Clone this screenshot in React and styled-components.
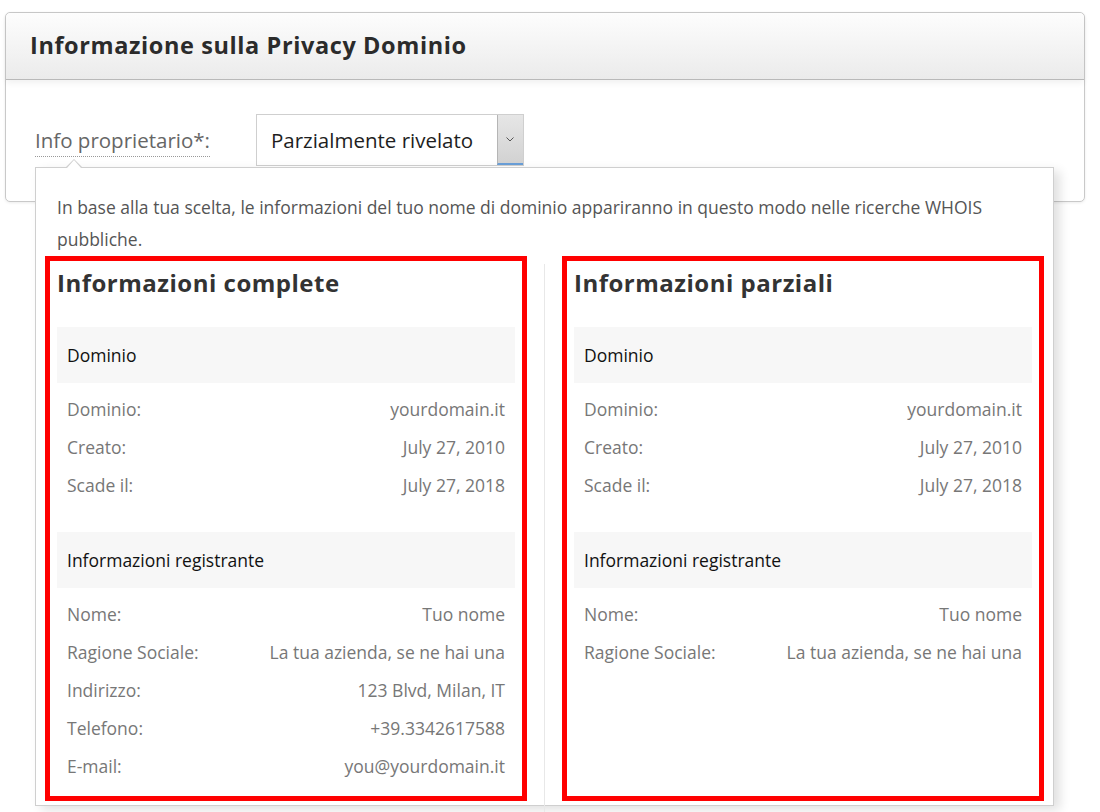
import React from 'react';
import styled, { createGlobalStyle } from 'styled-components';

const GlobalStyle = createGlobalStyle`
  body {
    margin: 0;
    background: #fff;
    font-family: "Open Sans", "Liberation Sans", sans-serif;
  }
`;

const Page = styled.div`
  position: relative;
  padding: 12px 15px 0 5px;
  height: 812px;
  box-sizing: border-box;
`;

const Card = styled.div`
  border: 1px solid #c9c9c9;
  border-radius: 5px;
  background: #fff;
  box-shadow: 0 1px 3px rgba(0, 0, 0, 0.08);
`;

const CardHeader = styled.div`
  height: 66px;
  display: flex;
  align-items: center;
  padding: 0 24px;
  background: linear-gradient(to bottom, #fdfdfd 0%, #ebebeb 100%);
  border-bottom: 1px solid #b9b9b9;
  border-radius: 5px 5px 0 0;
  box-shadow: 0 3px 6px rgba(0, 0, 0, 0.06);
`;

const Title = styled.h2`
  margin: -3px 0 0;
  font-family: "Open Sans", "Liberation Sans", sans-serif;
  font-weight: 700;
  font-size: 23.5px;
  color: #2b2b2b;
  letter-spacing: 0.6px;
`;

const CardBody = styled.div`
  padding: 34px 29px 35px;
`;

const FormRow = styled.div`
  position: relative;
  display: flex;
  align-items: center;
  gap: 46px;
`;

const Label = styled.span`
  margin-top: 4px;
  font-size: 20.5px;
  color: #666;
  padding-bottom: 2px;
  border-bottom: 1px dotted #999;
  line-height: 27px;
`;

const Select = styled.div`
  width: 268px;
  height: 52px;
  box-sizing: border-box;
  border: 1px solid #cfcfcf;
  display: flex;
  align-items: stretch;
  background: #fff;
`;

const SelectValue = styled.span`
  flex: 1;
  display: flex;
  align-items: center;
  padding-left: 14px;
  font-size: 20.5px;
  color: #1e1e1e;
`;

const SelectArrow = styled.span`
  width: 25px;
  display: flex;
  align-items: center;
  justify-content: center;
  border-left: 1px solid #b5b5b5;
  border-bottom: 2px solid #6a9fd8;
  background: linear-gradient(to bottom, #e6e6e6, #d2d2d2);
  color: #555;
`;

const Popover = styled.div`
  position: absolute;
  left: 35px;
  top: 167px;
  width: 1019px;
  height: 639px;
  box-sizing: border-box;
  border: 1px solid #cfcfcf;
  background: #fff;
  padding: 23px 21px 0;
  box-shadow: 6px 4px 10px rgba(0, 0, 0, 0.12);

  &::before,
  &::after {
    content: '';
    position: absolute;
    left: 30px;
    width: 0;
    height: 0;
    border-left: 8px solid transparent;
    border-right: 8px solid transparent;
  }
  &::before {
    top: -9px;
    border-bottom: 8px solid #cfcfcf;
  }
  &::after {
    top: -8px;
    left: 31px;
    border-left-width: 7px;
    border-right-width: 7px;
    border-bottom: 8px solid #fff;
  }
`;

const Intro = styled.p`
  margin: 0;
  font-size: 17.5px;
  line-height: 32px;
  color: #555;
`;

const Columns = styled.div`
  display: grid;
  grid-template-columns: 1fr 1px 1fr;
  column-gap: 29px;
  margin-top: 13px;
  height: 550px;
`;

const Divider = styled.div`
  background: #e8e8e8;
  margin-top: -4px;
`;

const Annotated = styled.div`
  outline: 5px solid #ff0000;
  outline-offset: 7px;
  height: 521px;
`;

const ColumnTitle = styled.h3`
  margin: 0 0 29px;
  font-family: "Open Sans", "Liberation Sans", sans-serif;
  font-weight: 700;
  font-size: 24px;
  line-height: 30px;
  letter-spacing: 0.5px;
  color: #333;
`;

const Group = styled.div`
  margin-bottom: 28px;
`;

const SectionHead = styled.div`
  height: 56px;
  display: flex;
  align-items: center;
  padding-left: 10px;
  background: #f7f7f7;
  font-size: 17.5px;
  color: #111;
  margin-bottom: 7px;
`;

const Row = styled.div`
  height: 38px;
  display: flex;
  align-items: center;
  justify-content: space-between;
  padding: 0 10px;
  font-size: 17.5px;
  color: #777;
`;

const domainRows = [
  ['Dominio:', 'yourdomain.it'],
  ['Creato:', 'July 27, 2010'],
  ['Scade il:', 'July 27, 2018'],
];

const fullRegistrant = [
  ['Nome:', 'Tuo nome'],
  ['Ragione Sociale:', 'La tua azienda, se ne hai una'],
  ['Indirizzo:', '123 Blvd, Milan, IT'],
  ['Telefono:', '+39.3342617588'],
  ['E-mail:', 'you@yourdomain.it'],
];

const partialRegistrant = fullRegistrant.slice(0, 2);

function InfoColumn({ title, registrant }) {
  return (
    <div>
      <Annotated>
        <ColumnTitle>{title}</ColumnTitle>
        <Group>
          <SectionHead>Dominio</SectionHead>
          {domainRows.map(([k, v]) => (
            <Row key={k}>
              <span>{k}</span>
              <span>{v}</span>
            </Row>
          ))}
        </Group>
        <Group>
          <SectionHead>Informazioni registrante</SectionHead>
          {registrant.map(([k, v]) => (
            <Row key={k}>
              <span>{k}</span>
              <span>{v}</span>
            </Row>
          ))}
        </Group>
      </Annotated>
    </div>
  );
}

function App() {
  return (
    <Page>
      <GlobalStyle />
      <Card>
        <CardHeader>
          <Title>Informazione sulla Privacy Dominio</Title>
        </CardHeader>
        <CardBody>
          <FormRow>
            <Label>Info proprietario*:</Label>
            <Select>
              <SelectValue>Parzialmente rivelato</SelectValue>
              <SelectArrow>
                <svg width="8" height="5" viewBox="0 0 8 5">
                  <path d="M0.5 0.5 L4 4 L7.5 0.5" fill="none" stroke="#555" strokeWidth="1" />
                </svg>
              </SelectArrow>
            </Select>
          </FormRow>
        </CardBody>
      </Card>
      <Popover>
        <Intro>
          In base alla tua scelta, le informazioni del tuo nome di dominio appariranno in questo modo nelle ricerche WHOIS pubbliche.
        </Intro>
        <Columns>
          <InfoColumn title="Informazioni complete" registrant={fullRegistrant} />
          <Divider />
          <InfoColumn title="Informazioni parziali" registrant={partialRegistrant} />
        </Columns>
      </Popover>
    </Page>
  );
}

export default App;
